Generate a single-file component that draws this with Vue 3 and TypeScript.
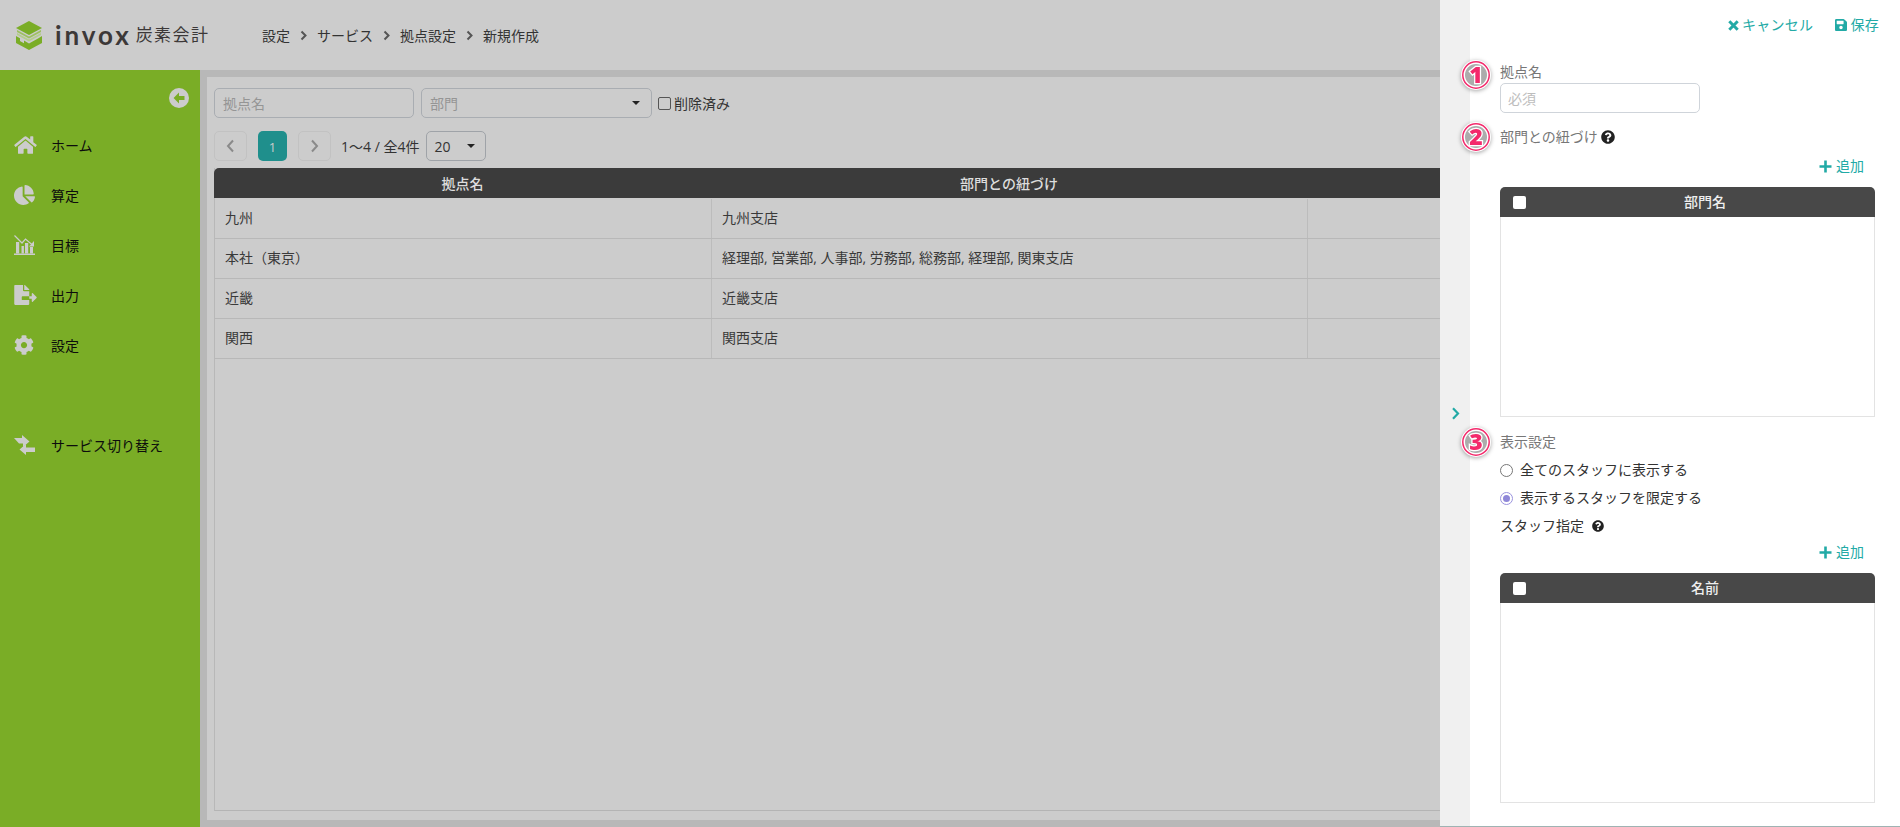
<script setup lang="ts">
interface Row { name: string; depts: string }
interface Nav { label: string; icon: string; gap?: boolean }

const crumbs: string[] = ['設定', 'サービス', '拠点設定', '新規作成']
const rows: Row[] = [
  { name: '九州', depts: '九州支店' },
  { name: '本社（東京）', depts: '経理部, 営業部, 人事部, 労務部, 総務部, 経理部, 関東支店' },
  { name: '近畿', depts: '近畿支店' },
  { name: '関西', depts: '関西支店' },
]
const nav: Nav[] = [
  { label: 'ホーム', icon: 'home' },
  { label: '算定', icon: 'pie' },
  { label: '目標', icon: 'chart' },
  { label: '出力', icon: 'file' },
  { label: '設定', icon: 'cog' },
  { label: 'サービス切り替え', icon: 'swap', gap: true },
]
const question =
  'M504 256c0 136.997-111.043 248-248 248S8 392.997 8 256C8 119.083 119.043 8 256 8s248 111.083 248 248zM262.655 90c-54.497 0-89.255 22.957-116.549 63.758-3.536 5.286-2.353 12.415 2.715 16.258l34.699 26.31c5.205 3.947 12.621 3.008 16.665-2.122 17.864-22.658 30.113-35.797 57.303-35.797 20.429 0 45.698 13.148 45.698 32.958 0 14.976-12.363 22.667-32.534 33.976C247.128 238.528 216 254.941 216 296v4c0 6.627 5.373 12 12 12h56c6.627 0 12-5.373 12-12v-1.333c0-28.462 83.186-29.647 83.186-106.667 0-58.002-60.165-102-116.531-102zM256 338c-25.365 0-46 20.635-46 46 0 25.364 20.635 46 46 46s46-20.636 46-46c0-25.365-20.635-46-46-46z'
const marks = [
  { n: '1', top: 59 },
  { n: '2', top: 121 },
  { n: '3', top: 426 },
]
</script>

<template>
  <div class="app">
    <header class="topbar">
      <div class="logo">
        <svg class="logo-mark" width="30" height="30" viewBox="0 0 30 30">
          <path d="M15 1 L28 8 L15 15 L2 8 Z" fill="#7aad26" />
          <path d="M3 10 L15 16.5 L27 10 L27 12 L15 18.5 L3 12 Z" fill="#9dc060" />
          <path d="M3 13 L15 19.5 L27 13 L27 15 L15 21.5 L3 15 Z" fill="#b5cd8c" />
          <path d="M2 16 L6 18.2 L6 21 L10 23.2 L10 20.6 L15 23.4 L24 18.5 L28 16 L28 23 L15 30 L2 23 Z" fill="#7aad26" />
        </svg>
        <span class="logo-word">invox</span>
        <span class="logo-sub">炭素会計</span>
      </div>
      <nav class="crumbs">
        <template v-for="(c, i) in crumbs" :key="c">
          <svg v-if="i > 0" class="crumb-sep" width="7" height="11" viewBox="0 0 7 11">
            <path d="M1.5 1.5 L5.5 5.5 L1.5 9.5" fill="none" stroke="#555" stroke-width="2" />
          </svg>
          <span>{{ c }}</span>
        </template>
      </nav>
    </header>

    <div class="body">
      <aside class="sidebar">
        <div class="collapse">
          <svg width="20" height="20" viewBox="0 0 20 20">
            <circle cx="10" cy="10" r="10" fill="#ccc" />
            <path d="M10 4.6 L4.6 10 L10 15.4 L10 12 L15.5 12 L15.5 8 L10 8 Z" fill="#7aad26" />
          </svg>
        </div>
        <ul class="menu">
          <li v-for="item in nav" :key="item.label" class="menu-item" :class="{ 'menu-gap': item.gap }">
            <span class="menu-icon">
              <svg v-if="item.icon === 'home'" width="23" height="20" viewBox="0 0 576 512" fill="#ccc">
                <path d="M280.37 148.26L96 300.11V464a16 16 0 0 0 16 16l112.06-.29a16 16 0 0 0 15.92-16V368a16 16 0 0 1 16-16h64a16 16 0 0 1 16 16v95.64a16 16 0 0 0 16 16.05L464 480a16 16 0 0 0 16-16V300L295.67 148.26a12.19 12.19 0 0 0-15.3 0zM571.6 251.47L488 182.56V44.05a12 12 0 0 0-12-12h-56a12 12 0 0 0-12 12v72.61L318.47 43a48 48 0 0 0-61 0L4.34 251.47a12 12 0 0 0-1.6 16.9l25.5 31A12 12 0 0 0 45.15 301l235.22-193.74a12.19 12.19 0 0 1 15.3 0L530.9 301a12 12 0 0 0 16.9-1.6l25.5-31a12 12 0 0 0-1.7-16.93z" />
              </svg>
              <svg v-else-if="item.icon === 'pie'" width="21" height="20" viewBox="0 0 544 512" fill="#ccc">
                <path d="M527.79 288H290.5l158.03 158.03c6.04 6.04 15.98 6.53 22.19.68 38.7-36.46 65.32-85.61 73.13-140.86 1.34-9.46-6.51-17.85-16.06-17.85zm-15.83-64.8C503.72 103.74 408.26 8.28 288.8.04 279.68-.59 272 7.1 272 16.24V240h223.77c9.14 0 16.82-7.68 16.19-16.8zM224 288V50.71c0-9.55-8.39-17.4-17.85-16.06C86.99 51.49-4.1 155.6.14 280.37 4.5 408.51 114.83 513.59 243.03 511.98c50.4-.63 96.97-16.87 135.26-44.03 7.9-5.6 8.42-17.23 1.57-24.08L224 288z" />
              </svg>
              <svg v-else-if="item.icon === 'chart'" width="21" height="20" viewBox="0 0 21 20">
                <path d="M0.5 0.5 L8 8 L11.5 4 L18.5 10" fill="none" stroke="#ccc" stroke-width="1.2" />
                <path d="M20 6 L20 11.5 L15 11.5 Z" fill="#ccc" />
                <rect x="2" y="7" width="3.2" height="11.5" fill="#ccc" />
                <rect x="7.5" y="11" width="2.4" height="7.5" fill="#ccc" />
                <rect x="11" y="8" width="3.2" height="10.5" fill="#ccc" />
                <rect x="16" y="12" width="3" height="6.5" fill="#ccc" />
                <rect x="0" y="18.5" width="21" height="1.5" fill="#ccc" />
              </svg>
              <svg v-else-if="item.icon === 'file'" width="23" height="20" viewBox="0 0 576 512" fill="#ccc">
                <path d="M384 121.9c0-6.3-2.5-12.4-7-16.9L279.1 7c-4.5-4.5-10.6-7-17-7H256v128h128v-6.1zM192 336v-32c0-8.84 7.16-16 16-16h176V160H248c-13.2 0-24-10.8-24-24V0H24C10.7 0 0 10.7 0 24v464c0 13.3 10.7 24 24 24h336c13.3 0 24-10.7 24-24V384H208c-8.84 0-16-7.16-16-16zM571 308l-95.7-96.4c-10.1-10.1-27.4-3-27.4 11.3V288h-64v64h64v65.2c0 14.3 17.3 21.4 27.4 11.3L571 332c6.6-6.6 6.6-17.4 0-24z" />
              </svg>
              <svg v-else-if="item.icon === 'cog'" width="20" height="20" viewBox="0 0 512 512" fill="#ccc">
                <path d="M487.4 315.7l-42.6-24.6c4.3-23.2 4.3-47 0-70.2l42.6-24.6c4.9-2.8 7.1-8.6 5.5-14-11.1-35.6-30-67.8-54.7-94.6-3.8-4.1-10-5.1-14.8-2.3L380.8 110c-17.9-15.4-38.5-27.3-60.8-35.1V25.8c0-5.6-3.9-10.5-9.4-11.7-36.7-8.2-74.3-7.8-109.2 0-5.5 1.2-9.4 6.1-9.4 11.7V75c-22.2 7.9-42.8 19.8-60.8 35.1L88.7 85.5c-4.9-2.8-11-1.9-14.8 2.3-24.7 26.7-43.6 58.9-54.7 94.6-1.7 5.4.6 11.2 5.5 14L67.3 221c-4.3 23.2-4.3 47 0 70.2l-42.6 24.6c-4.9 2.8-7.1 8.6-5.5 14 11.1 35.6 30 67.8 54.7 94.6 3.8 4.1 10 5.1 14.8 2.3l42.6-24.6c17.9 15.4 38.5 27.3 60.8 35.1v49.2c0 5.6 3.9 10.5 9.4 11.7 36.7 8.2 74.3 7.8 109.2 0 5.5-1.2 9.4-6.1 9.4-11.7v-49.2c22.2-7.9 42.8-19.8 60.8-35.1l42.6 24.6c4.9 2.8 11 1.9 14.8-2.3 24.7-26.7 43.6-58.9 54.7-94.6 1.5-5.5-.7-11.3-5.6-14.1zM256 336c-44.1 0-80-35.9-80-80s35.9-80 80-80 80 35.9 80 80-35.9 80-80 80z" />
              </svg>
              <svg v-else width="21" height="20" viewBox="0 0 21 20" fill="#ccc">
                <path d="M0 3 H8 V0 L15.5 6.5 L9 12 V8.5 H5 Z" />
                <path d="M21 12.5 V17 H12 V20 L5.5 14.5 L12 9 V12.5 Z" />
              </svg>
            </span>
            <span class="menu-label">{{ item.label }}</span>
          </li>
        </ul>
      </aside>

      <main class="main">
        <section class="card">
          <div class="filters">
            <div class="field field-name placeholder">拠点名</div>
            <div class="field field-dept placeholder">
              <span>部門</span>
              <i class="caret"></i>
            </div>
            <label class="deleted"><span class="check"></span><span class="deleted-text">削除済み</span></label>
          </div>
          <div class="pager">
            <button class="page-btn">
              <svg width="9" height="14" viewBox="0 0 9 14"><path d="M7 1.5 L2 7 L7 12.5" fill="none" stroke="#8a8a8a" stroke-width="2" /></svg>
            </button>
            <button class="page-current">1</button>
            <button class="page-btn">
              <svg width="9" height="14" viewBox="0 0 9 14"><path d="M2 1.5 L7 7 L2 12.5" fill="none" stroke="#8a8a8a" stroke-width="2" /></svg>
            </button>
            <span class="page-info">1〜4 / 全4件</span>
            <div class="field page-size"><span>20</span><i class="caret"></i></div>
          </div>
          <div class="list">
            <div class="list-head">
              <div class="col-a">拠点名</div>
              <div class="col-b">部門との紐づけ</div>
            </div>
            <div v-for="r in rows" :key="r.name" class="list-row">
              <div class="col-a cell">{{ r.name }}</div>
              <div class="col-b cell">{{ r.depts }}</div>
              <div class="col-c cell"></div>
            </div>
          </div>
        </section>
      </main>
    </div>

    <aside class="panel">
      <div class="strip">
        <svg width="9" height="13" viewBox="0 0 9 13"><path d="M2 1.2 L7 6.5 L2 11.8" fill="none" stroke="#22aaa6" stroke-width="2.2" /></svg>
      </div>
      <div class="sheet">
        <div class="actions">
          <a class="action">
            <svg width="11" height="11" viewBox="0 0 11 11"><path d="M1.3 1.3 L9.7 9.7 M9.7 1.3 L1.3 9.7" stroke="#22aaa6" stroke-width="3" /></svg>
            キャンセル
          </a>
          <a class="action">
            <svg width="12" height="14" viewBox="0 0 448 512" fill="#22aaa6"><path d="M433.941 129.941l-83.882-83.882A48 48 0 0 0 316.118 32H48C21.49 32 0 53.49 0 80v352c0 26.51 21.49 48 48 48h352c26.51 0 48-21.49 48-48V163.882a48 48 0 0 0-14.059-33.941zM224 416c-35.346 0-64-28.654-64-64 0-35.346 28.654-64 64-64s64 28.654 64 64c0 35.346-28.654 64-64 64zm96-304.52V212c0 6.627-5.373 12-12 12H76c-6.627 0-12-5.373-12-12V108c0-6.627 5.373-12 12-12h228.52c3.183 0 6.235 1.264 8.485 3.515l3.48 3.48A11.996 11.996 0 0 1 320 111.48z" /></svg>
            保存
          </a>
        </div>

        <div class="label label-1">拠点名</div>
        <div class="text-input">必須</div>

        <div class="label label-2">
          部門との紐づけ
          <svg class="help" width="14" height="14" viewBox="0 0 512 512" fill="#222"><path :d="question" /></svg>
        </div>
        <div class="add add-1">
          <svg width="13" height="13" viewBox="0 0 13 13"><path d="M6.5 0.5 V12.5 M0.5 6.5 H12.5" stroke="#22aaa6" stroke-width="2.6" /></svg>
          追加
        </div>
        <div class="mini-table">
          <div class="mini-head"><span class="mini-check"></span><span class="mini-title">部門名</span></div>
          <div class="mini-body"></div>
        </div>

        <div class="label label-3">表示設定</div>
        <div class="radio"><span class="dot"></span>全てのスタッフに表示する</div>
        <div class="radio radio-2"><span class="dot dot-on"></span>表示するスタッフを限定する</div>
        <div class="staff">
          スタッフ指定
          <svg class="help-2" width="12" height="12" viewBox="0 0 512 512" fill="#222"><path :d="question" /></svg>
        </div>
        <div class="add add-2">
          <svg width="13" height="13" viewBox="0 0 13 13"><path d="M6.5 0.5 V12.5 M0.5 6.5 H12.5" stroke="#22aaa6" stroke-width="2.6" /></svg>
          追加
        </div>
        <div class="mini-table">
          <div class="mini-head"><span class="mini-check"></span><span class="mini-title">名前</span></div>
          <div class="mini-body"></div>
        </div>
      </div>

      <svg
        v-for="m in marks"
        :key="m.n"
        class="mark"
        :style="{ top: m.top + 'px' }"
        width="32"
        height="32"
        viewBox="0 0 32 32"
      >
        <circle cx="16" cy="16" r="15" fill="#fff" />
        <circle cx="16" cy="16" r="13.2" fill="#fff" stroke="#f32a6c" stroke-width="1.5" />
        <circle cx="16" cy="16" r="11" fill="#acacac" />
        <text x="16" y="24" text-anchor="middle" class="mark-text">{{ m.n }}</text>
      </svg>
    </aside>
  </div>
</template>

<style>
html, body { margin: 0; padding: 0; overflow: hidden; }
</style>

<style scoped>
.app {
  position: relative;
  width: 1900px;
  height: 827px;
  overflow: hidden;
  display: flex;
  flex-direction: column;
  background: #b8b8b8;
  color: #333;
  font-family: "Open Sans", "Noto Sans CJK JP", sans-serif;
  font-size: 14px;
  line-height: 20px;
}
.topbar {
  height: 70px;
  flex: none;
  display: flex;
  align-items: center;
  background: #ccc;
}
.logo {
  display: flex;
  align-items: center;
  width: 262px;
  padding-left: 14px;
  box-sizing: border-box;
}
.logo-mark { flex: none; }
.logo-word {
  margin-left: 11px;
  font-family: "Lato", sans-serif;
  font-weight: 700;
  font-size: 26px;
  letter-spacing: 2.9px;
  color: #3c3838;
  line-height: 30px;
}
.logo-sub {
  margin-left: 4px;
  font-size: 17px;
  letter-spacing: 1.4px;
  color: #3c3838;
  white-space: nowrap;
}
.crumbs {
  display: flex;
  align-items: center;
  margin-top: 1px;
  color: #333;
}
.crumb-sep { flex: none; margin: 0 10px; }

.body { flex: 1; display: flex; min-height: 0; }
.sidebar {
  width: 200px;
  flex: none;
  background: #7aad26;
  position: relative;
}
.collapse {
  position: absolute;
  top: 18px;
  right: 11px;
  line-height: 0;
}
.menu {
  list-style: none;
  margin: 0;
  padding: 50px 0 0;
}
.menu-item {
  height: 50px;
  display: flex;
  align-items: center;
  color: #0c0c0c;
}
.menu-gap { margin-top: 50px; }
.menu-icon {
  width: 51px;
  padding-left: 14px;
  box-sizing: border-box;
  display: flex;
  align-items: center;
  line-height: 0;
}
.menu-label { padding-top: 2px; }

.main {
  flex: 1;
  min-width: 0;
  padding: 7px 0 7px 7px;
  display: flex;
}
.card {
  flex: 1;
  min-width: 0;
  background: #ccc;
  padding: 11px 7px 9px;
  display: flex;
  flex-direction: column;
}
.filters { display: flex; align-items: center; height: 30px; }
.field {
  height: 30px;
  box-sizing: border-box;
  border: 1px solid #a9adb2;
  border-radius: 5px;
  padding: 2px 8px 0;
  display: flex;
  align-items: center;
  justify-content: space-between;
}
.placeholder { color: #959595; }
.field-name { width: 200px; }
.field-dept { width: 231px; margin-left: 7px; }
.caret {
  width: 0;
  height: 0;
  border-left: 4px solid transparent;
  border-right: 4px solid transparent;
  border-top: 4px solid #222;
  margin: -2px 3px 0 0;
}
.deleted { display: flex; align-items: center; margin-left: 6px; color: #333; }
.deleted-text { padding-top: 2px; }
.check {
  width: 13px;
  height: 13px;
  box-sizing: border-box;
  border: 1px solid #555;
  border-radius: 2px;
  margin-right: 3px;
}
.pager { display: flex; align-items: center; height: 30px; margin-top: 13px; }
.page-btn, .page-current {
  height: 30px;
  box-sizing: border-box;
  border-radius: 5px;
  padding: 0;
  font: inherit;
  display: flex;
  align-items: center;
  justify-content: center;
}
.page-btn { width: 33px; border: 1px solid #c2c2c2; background: transparent; }
.page-current {
  width: 29px;
  margin: 0 11px;
  border: none;
  background: #1f8f8c;
  color: #ccc;
  font-size: 13px;
  padding-top: 2px;
}
.page-info { margin-left: 10px; padding-top: 2px; white-space: nowrap; }
.page-size { width: 60px; margin-left: 7px; border-color: #9fa3a8; padding: 2px 7px 0; }
.list {
  margin-top: 7px;
  flex: 1;
  border-left: 1px solid #b8b8b8;
  border-bottom: 1px solid #b4b4b4;
  width: 1700px;
}
.list-head {
  height: 30px;
  margin: 0 0 1px -1px;
  display: flex;
  background: #3b3b3b;
  color: #ddd;
  border-radius: 5px 0 0 0;
  font-weight: 500;
  line-height: 32px;
  text-align: center;
}
.col-a { width: 497px; flex: none; box-sizing: border-box; }
.col-b { width: 596px; flex: none; box-sizing: border-box; }
.col-c { flex: 1; }
.list-row {
  height: 40px;
  box-sizing: border-box;
  display: flex;
  border-bottom: 1px solid #b8b8b8;
}
.cell {
  padding: 0 10px;
  line-height: 38px;
  border-right: 1px solid #bcbcbc;
  color: #3a3a3a;
}
.col-c.cell { border-right: none; }

.panel {
  position: absolute;
  top: 0;
  right: 0;
  bottom: 0;
  width: 460px;
  display: flex;
  border-bottom: 1px solid #9fb3b3;
  box-sizing: border-box;
}
.strip {
  width: 30px;
  flex: none;
  background: #f0f0f0;
  display: flex;
  align-items: center;
  justify-content: center;
}
.strip svg { margin-top: 1px; }
.sheet {
  flex: 1;
  background: #fff;
  padding: 0 25px 0 30px;
  color: #333;
}
.actions {
  height: 50px;
  display: flex;
  align-items: center;
  justify-content: flex-end;
  gap: 22px;
  margin-right: -4px;
  color: #22aaa6;
}
.action { display: flex; align-items: center; gap: 3px; letter-spacing: 0.3px; }
.label { color: #777; height: 20px; display: flex; align-items: center; }
.label-1 { margin-top: 12px; }
.label-2 { margin-top: 14px; }
.label-3 { margin-top: 15px; }
.help { margin-left: 3px; }
.text-input {
  margin-top: 1px;
  width: 200px;
  height: 30px;
  box-sizing: border-box;
  border: 1px solid #cfd4da;
  border-radius: 5px;
  padding: 0 7px;
  line-height: 30px;
  color: #bdbdbd;
}
.add {
  height: 20px;
  display: flex;
  align-items: center;
  justify-content: flex-end;
  gap: 4px;
  padding-right: 11px;
  color: #22aaa6;
}
.add-1 { margin-top: 9px; }
.add-2 { margin-top: 6px; }
.mini-table { margin-top: 11px; }
.mini-head {
  height: 30px;
  background: #484848;
  color: #eee;
  border-radius: 5px 5px 0 0;
  display: flex;
  align-items: center;
  font-weight: 500;
}
.mini-check {
  width: 13px;
  height: 13px;
  margin-left: 13px;
  background: #fff;
  border-radius: 2px;
  flex: none;
}
.mini-title { flex: 1; text-align: center; padding-left: 9px; }
.mini-body {
  height: 200px;
  box-sizing: border-box;
  border: 1px solid #e3e3e3;
  border-top: none;
}
.radio { margin-top: 8px; height: 20px; display: flex; align-items: center; }
.radio-2 { margin-top: 8px; }
.dot {
  width: 13px;
  height: 13px;
  box-sizing: border-box;
  border: 1px solid #777;
  border-radius: 50%;
  margin-right: 7px;
  background: #fff;
  position: relative;
}
.dot-on { border-color: #9a93de; }
.dot-on::after {
  content: "";
  position: absolute;
  inset: 2px;
  border-radius: 50%;
  background: #8f87d8;
}
.staff { margin-top: 8px; height: 20px; display: flex; align-items: center; }
.help-2 { margin-left: 8px; }

.mark {
  position: absolute;
  left: 20px;
  filter: drop-shadow(0 1px 2px rgba(0, 0, 0, 0.35));
}
.mark-text {
  font-family: "Open Sans", sans-serif;
  font-weight: 800;
  font-size: 23px;
  fill: #f32a6c;
  stroke: #fff;
  stroke-width: 2.5px;
  paint-order: stroke;
}
</style>
